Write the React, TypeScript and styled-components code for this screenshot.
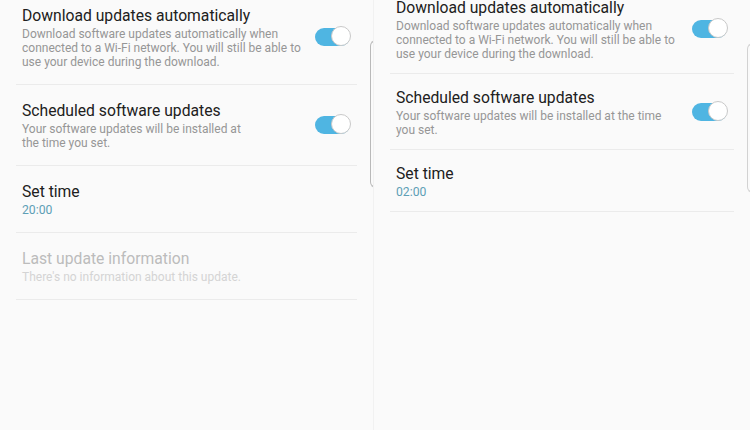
import React from 'react';
import styled, { createGlobalStyle } from 'styled-components';

const GlobalStyle = createGlobalStyle`
  html, body {
    margin: 0;
    padding: 0;
    background: #fafafa;
    overflow: hidden;
  }
  body {
    font-family: Roboto, "Noto Sans", "Liberation Sans", sans-serif;
  }
`;

interface SettingRow {
  title: string;
  lines?: string[];
  value?: string;
  toggle?: boolean;
  disabled?: boolean;
}

interface PanelData {
  shift: number; // 첫 행이 위로 잘린 정도
  padTop: number;
  padBottom: number;
  frameTop: number;
  frameHeight: number;
  frameColor: string;
  rows: SettingRow[];
}

const panels: PanelData[] = [
  {
    shift: -10,
    padTop: 15,
    padBottom: 15,
    frameTop: 40,
    frameHeight: 148,
    frameColor: '#b9b9b9',
    rows: [
      {
        title: 'Download updates automatically',
        lines: [
          'Download software updates automatically when',
          'connected to a Wi-Fi network. You will still be able to',
          'use your device during the download.',
        ],
        toggle: true,
      },
      {
        title: 'Scheduled software updates',
        lines: ['Your software updates will be installed at', 'the time you set.'],
        toggle: true,
      },
      { title: 'Set time', value: '20:00' },
      { title: 'Last update information', lines: ["There's no information about this update."], disabled: true },
    ],
  },
  {
    shift: -16,
    padTop: 13,
    padBottom: 12,
    frameTop: 43,
    frameHeight: 150,
    frameColor: '#d2d2d2',
    rows: [
      {
        title: 'Download updates automatically',
        lines: [
          'Download software updates automatically when',
          'connected to a Wi-Fi network. You will still be able to',
          'use your device during the download.',
        ],
        toggle: true,
      },
      {
        title: 'Scheduled software updates',
        lines: ['Your software updates will be installed at the time', 'you set.'],
        toggle: true,
      },
      { title: 'Set time', value: '02:00' },
    ],
  },
];

const App = () => {
  return (
    <>
      <GlobalStyle />
      <Screen>
        {panels.map((panel, i) => (
          <Panel key={i}>
            <List style={{ marginTop: panel.shift }}>
              {panel.rows.map((row) => (
                <Row key={row.title} $padTop={panel.padTop} $padBottom={panel.padBottom}>
                  <TextBlock>
                    <Title $disabled={row.disabled}>{row.title}</Title>
                    {row.lines &&
                      row.lines.map((line) => (
                        <Sub key={line} $disabled={row.disabled}>
                          {line}
                        </Sub>
                      ))}
                    {row.value && <Value>{row.value}</Value>}
                  </TextBlock>
                  {row.toggle && (
                    <Switch>
                      <Knob />
                    </Switch>
                  )}
                </Row>
              ))}
            </List>
            <FrameEdge $top={panel.frameTop} $height={panel.frameHeight} $color={panel.frameColor} />
          </Panel>
        ))}
      </Screen>
    </>
  );
};

export default App;

const Screen = styled.div`
  width: 750px;
  height: 430px;
  display: grid;
  grid-template-columns: 374px 376px;
  background: #fafafa;
  overflow: hidden;
`;

const Panel = styled.div`
  position: relative;
  overflow: hidden;
  &:first-child {
    border-right: 1px solid #f1f1f1;
  }
`;

const List = styled.div`
  display: flex;
  flex-direction: column;
  padding: 0 16px 0 16px;
`;

const Row = styled.div<{ $padTop: number; $padBottom: number }>`
  display: flex;
  align-items: center;
  justify-content: space-between;
  padding: ${(p) => p.$padTop}px 6px ${(p) => p.$padBottom}px 6px;
  border-bottom: 1px solid #ebebeb;
`;

const TextBlock = styled.div`
  display: flex;
  flex-direction: column;
`;

const Title = styled.div<{ $disabled?: boolean }>`
  font-size: 15.7px;
  line-height: 22px;
  color: ${(p) => (p.$disabled ? '#bcbcbc' : '#202020')};
  white-space: nowrap;
`;

const Sub = styled.div<{ $disabled?: boolean }>`
  font-size: 12px;
  line-height: 14px;
  color: ${(p) => (p.$disabled ? '#d4d4d4' : '#969696')};
  white-space: nowrap;
`;

const Value = styled.div`
  font-size: 12.2px;
  line-height: 14px;
  color: #5e9fb6;
`;

const Switch = styled.div`
  position: relative;
  width: 35px;
  height: 18px;
  border-radius: 9px;
  background: #4fb5e2;
  margin-right: 1px;
  flex-shrink: 0;
`;

const Knob = styled.div`
  position: absolute;
  right: -1px;
  top: -2px;
  width: 20px;
  height: 20px;
  border-radius: 50%;
  background: #ffffff;
  border: 1px solid #c9c9c9;
  box-sizing: border-box;
`;

const FrameEdge = styled.div<{ $top: number; $height: number; $color: string }>`
  position: absolute;
  right: -3px;
  top: ${(p) => p.$top}px;
  width: 6px;
  height: ${(p) => p.$height}px;
  border: 1.5px solid ${(p) => p.$color};
  border-right: none;
  border-radius: 6px 0 0 6px;
  box-sizing: border-box;
`;
